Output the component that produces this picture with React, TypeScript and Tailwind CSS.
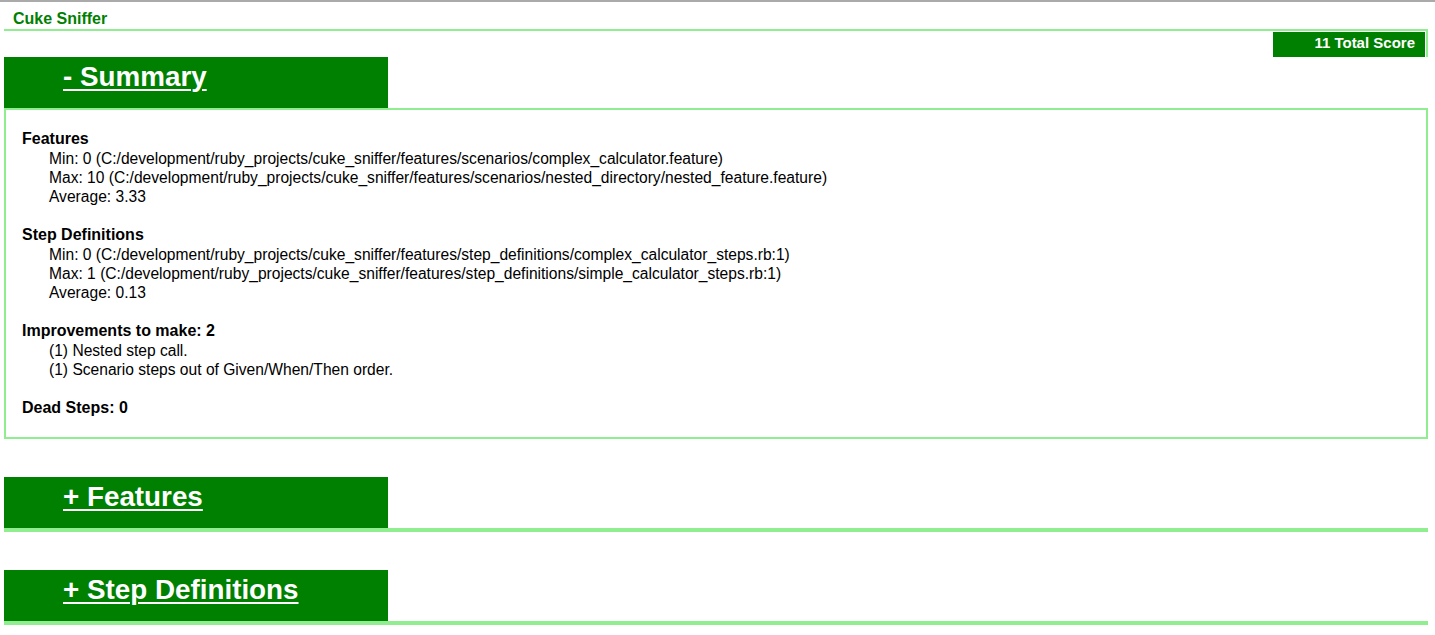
import React from 'react';

const summaryGroups = [
  {
    title: 'Features',
    items: [
      'Min: 0 (C:/development/ruby_projects/cuke_sniffer/features/scenarios/complex_calculator.feature)',
      'Max: 10 (C:/development/ruby_projects/cuke_sniffer/features/scenarios/nested_directory/nested_feature.feature)',
      'Average: 3.33',
    ],
  },
  {
    title: 'Step Definitions',
    items: [
      'Min: 0 (C:/development/ruby_projects/cuke_sniffer/features/step_definitions/complex_calculator_steps.rb:1)',
      'Max: 1 (C:/development/ruby_projects/cuke_sniffer/features/step_definitions/simple_calculator_steps.rb:1)',
      'Average: 0.13',
    ],
  },
  {
    title: 'Improvements to make: 2',
    items: ['(1) Nested step call.', '(1) Scenario steps out of Given/When/Then order.'],
  },
];

const SectionHeader: React.FC<{ label: string }> = ({ label }) => (
  <div className="w-[384px] h-[51px] bg-[#008000] pl-[59px] pt-[4px]">
    <a href="#" className="text-white font-bold text-[27.8px] leading-[32px] underline underline-offset-[3px] decoration-2">
      {label}
    </a>
  </div>
);

export default function App() {
  return (
    <div className="bg-white min-h-screen text-black" style={{ fontFamily: '"Liberation Sans", Arial, sans-serif' }}>
      {/* top bar */}
      <div className="border-t-2 border-[#aaaaaa]">
        <div className="h-[27px] pl-[13px] pt-[8px] text-[16px] leading-[18px] font-bold text-[#008000]">Cuke Sniffer</div>
      </div>

      <div className="ml-[4px] w-[1424px]">
        {/* score */}
        <div className="h-[28px] border-t-2 border-r-2 border-[#90ee90] flex justify-end">
          <div className="mt-[1px] mr-[1px] w-[152px] h-[25px] bg-[#008000] text-white font-bold text-[15px] leading-[22px] text-right pr-[10px]">
            11 Total Score
          </div>
        </div>

        {/* summary */}
        <SectionHeader label="- Summary" />
        <div className="border-2 border-[#90ee90] pt-[19px] pb-[19px] pl-[16px] text-[16px]">
          {summaryGroups.map(g => (
            <div key={g.title} className="mb-[19px]">
              <div className="font-bold leading-[20px]">{g.title}</div>
              {g.items.map(item => (
                <div key={item} className="pl-[27px] leading-[19px] text-[15.6px]">{item}</div>
              ))}
            </div>
          ))}
          <div className="font-bold leading-[20px]">Dead Steps: 0</div>
        </div>

        {/* features */}
        <div className="mt-[38px]">
          <SectionHeader label="+ Features" />
          <div className="border-2 border-[#90ee90]"></div>
        </div>

        {/* step definitions */}
        <div className="mt-[38px]">
          <SectionHeader label="+ Step Definitions" />
          <div className="border-2 border-[#90ee90]"></div>
        </div>
      </div>
    </div>
  );
}
